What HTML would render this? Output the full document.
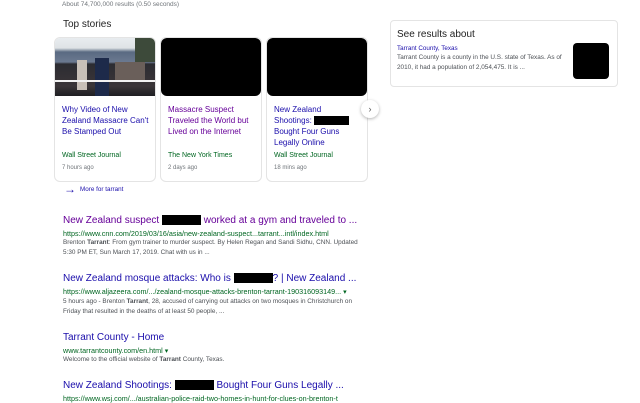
<!DOCTYPE html>
<html><head><meta charset="utf-8"><style>
*{margin:0;padding:0;box-sizing:border-box}
body{width:640px;height:400px;overflow:hidden;background:#fff;font-family:"Liberation Sans",Arial,sans-serif;position:relative}
.a{position:absolute;white-space:nowrap}
.card{position:absolute;top:37px;width:102px;height:145px;border:1px solid #e4e4e4;border-radius:6px;overflow:hidden;background:#fff}
.img{position:absolute;left:0;top:0;width:100%;height:58px;background:#000;border-radius:6px}
.ct{position:absolute;left:7px;top:66px;font-size:8px;line-height:11px;color:#1a0dab}
.src{position:absolute;left:7px;top:114px;font-size:7px;color:#006621}
.tm{position:absolute;left:7px;top:127px;font-size:6px;color:#70757a}
.t{font-size:10px;color:#1a0dab}
.u{font-size:7.2px;color:#006621}
.s{font-size:6.4px;color:#4d5156;line-height:10px}
.bx{display:inline-block;background:#000;height:10px;vertical-align:middle}
</style></head><body>
<div class="a" style="left:62px;top:1px;font-size:6.5px;color:#70757a">About 74,700,000 results (0.50 seconds)</div>
<div class="a" style="left:63px;top:19px;font-size:10px;color:#222">Top stories</div>

<div class="card" style="left:54px">
 <div style="position:absolute;left:0;top:0;width:102px;height:58px;background:linear-gradient(#e8ecef 0,#dfe3e6 10px,#5a6a82 14px,#6b7990 24px,#2c2c32 26px,#3a3538 48px,#1e1e22 58px)">
  <div style="position:absolute;left:40px;top:20px;width:14px;height:38px;background:#1d2a4a"></div>
  <div style="position:absolute;left:22px;top:22px;width:10px;height:30px;background:#c8c0b8"></div>
  <div style="position:absolute;left:60px;top:24px;width:30px;height:20px;background:#6a5f5a"></div>
  <div style="position:absolute;left:0;top:42px;width:102px;height:2px;background:#f2f2f2"></div>
  <div style="position:absolute;left:80px;top:0;width:22px;height:24px;background:#3d4a3a"></div>
 </div>
 <div class="ct">Why Video of New<br>Zealand Massacre Can't<br>Be Stamped Out</div>
 <div class="src">Wall Street Journal</div><div class="tm">7 hours ago</div>
</div>
<div class="card" style="left:160px">
 <div class="img"></div>
 <div class="ct" style="color:#660099">Massacre Suspect<br>Traveled the World but<br>Lived on the Internet</div>
 <div class="src">The New York Times</div><div class="tm">2 days ago</div>
</div>
<div class="card" style="left:266px">
 <div class="img"></div>
 <div class="ct">New Zealand<br>Shootings: <span class="bx" style="width:35px;height:9px"></span><br>Bought Four Guns<br>Legally Online</div>
 <div class="src">Wall Street Journal</div><div class="tm">18 mins ago</div>
</div>
<div class="a" style="left:361px;top:100px;width:18px;height:18px;border-radius:50%;background:#fff;box-shadow:0 1px 3px rgba(0,0,0,.3);font-size:9px;color:#555;text-align:center;line-height:18px">›</div>
<div class="a" style="left:64px;top:182px;font-size:12px;color:#1a0dab">→</div>
<div class="a" style="left:80px;top:186px;font-size:6.3px;color:#1a0dab">More for tarrant</div>

<div class="a t" style="left:63px;top:215px;color:#660099">New Zealand suspect <span class="bx" style="width:39px"></span> worked at a gym and traveled to ...</div>
<div class="a u" style="left:63px;top:229px">https://www.cnn.com/2019/03/16/asia/new-zealand-suspect...tarrant...intl/index.html</div>
<div class="a s" style="left:63px;top:238px">Brenton <b>Tarrant</b>: From gym trainer to murder suspect. By Helen Regan and Sandi Sidhu, CNN. Updated<br>5:30 PM ET, Sun March 17, 2019. Chat with us in ...</div>

<div class="a t" style="left:63px;top:273px">New Zealand mosque attacks: Who is <span class="bx" style="width:39px"></span>? | New Zealand ...</div>
<div class="a u" style="left:63px;top:287px">https://www.aljazeera.com/.../zealand-mosque-attacks-brenton-tarrant-190316093149... ▾</div>
<div class="a s" style="left:63px;top:297px">5 hours ago - Brenton <b>Tarrant</b>, 28, accused of carrying out attacks on two mosques in Christchurch on<br>Friday that resulted in the deaths of at least 50 people, ...</div>

<div class="a t" style="left:63px;top:332px">Tarrant County - Home</div>
<div class="a u" style="left:63px;top:346px">www.tarrantcounty.com/en.html ▾</div>
<div class="a s" style="left:63px;top:355px">Welcome to the official website of <b>Tarrant</b> County, Texas.</div>

<div class="a t" style="left:63px;top:380px">New Zealand Shootings: <span class="bx" style="width:39px"></span> Bought Four Guns Legally ...</div>
<div class="a u" style="left:63px;top:394px">https://www.wsj.com/.../australian-police-raid-two-homes-in-hunt-for-clues-on-brenton-t</div>

<div class="a" style="left:390px;top:20px;width:228px;height:67px;border:1px solid #e4e4e4;border-radius:4px"></div>
<div class="a" style="left:397px;top:29px;font-size:10px;color:#222">See results about</div>
<div class="a" style="left:397px;top:45px;font-size:6.3px;color:#1a0dab">Tarrant County, Texas</div>
<div class="a s" style="left:397px;top:53px">Tarrant County is a county in the U.S. state of Texas. As of<br>2010, it had a population of 2,054,475. It is ...</div>
<div class="a" style="left:573px;top:43px;width:36px;height:36px;background:#000;border-radius:4px"></div>
</body></html>
